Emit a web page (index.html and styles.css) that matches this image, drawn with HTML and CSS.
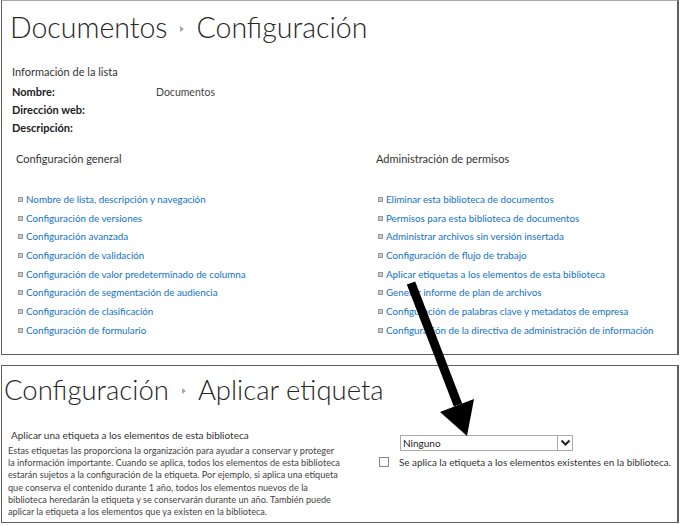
FILE: index.html
```html
<!DOCTYPE html>
<html lang="es">
<head>
<meta charset="utf-8">
<title>Configuración</title>
<link rel="stylesheet" href="styles.css">
</head>
<body>
<div class="panel p1">
  <div class="title"><span>Documentos</span><span class="crumb"></span><span>Configuración</span></div>
  <div class="info">
    <div class="info-h">Información de la lista</div>
    <div class="row"><span class="lbl">Nombre:</span><span class="val">Documentos</span></div>
    <div class="row"><span class="lbl">Dirección web:</span><span class="val"></span></div>
    <div class="row"><span class="lbl">Descripción:</span><span class="val"></span></div>
  </div>
  <div class="cols">
    <div class="col">
      <div class="col-h">Configuración general</div>
      <ul class="links">
        <li><a>Nombre de lista, descripción y navegación</a></li>
        <li><a>Configuración de versiones</a></li>
        <li><a>Configuración avanzada</a></li>
        <li><a>Configuración de validación</a></li>
        <li><a>Configuración de valor predeterminado de columna</a></li>
        <li><a>Configuración de segmentación de audiencia</a></li>
        <li><a>Configuración de clasificación</a></li>
        <li><a>Configuración de formulario</a></li>
      </ul>
    </div>
    <div class="col">
      <div class="col-h">Administración de permisos</div>
      <ul class="links">
        <li><a>Eliminar esta biblioteca de documentos</a></li>
        <li><a>Permisos para esta biblioteca de documentos</a></li>
        <li><a>Administrar archivos sin versión insertada</a></li>
        <li><a>Configuración de flujo de trabajo</a></li>
        <li><a>Aplicar etiquetas a los elementos de esta biblioteca</a></li>
        <li><a>Generar informe de plan de archivos</a></li>
        <li><a>Configuración de palabras clave y metadatos de empresa</a></li>
        <li><a>Configuración de la directiva de administración de información</a></li>
      </ul>
    </div>
  </div>
</div>
<div class="panel p2">
  <div class="title t2"><span>Configuración</span><span class="crumb"></span><span>Aplicar etiqueta</span></div>
  <div class="apply">
    <div class="apply-l">
      <div class="apply-h">Aplicar una etiqueta a los elementos de esta biblioteca</div>
      <p class="desc">Estas etiquetas las proporciona la organización para ayudar a conservar y proteger<br>la información importante. Cuando se aplica, todos los elementos de esta biblioteca<br>estarán sujetos a la configuración de la etiqueta. Por ejemplo, si aplica una etiqueta<br>que conserva el contenido durante 1 año, todos los elementos nuevos de la<br>biblioteca heredarán la etiqueta y se conservarán durante un año. También puede<br>aplicar la etiqueta a los elementos que ya existen en la biblioteca.</p>
    </div>
    <div class="apply-r">
      <div class="select"><span class="sel-text">Ninguno</span><span class="sel-btn"><svg width="11" height="8" viewBox="0 0 11 8"><path d="M1.5 1.5 L5.5 5.5 L9.5 1.5" fill="none" stroke="#222" stroke-width="2"/></svg></span></div>
      <label class="chk"><span class="box"></span><span>Se aplica la etiqueta a los elementos existentes en la biblioteca.</span></label>
    </div>
  </div>
</div>
<svg class="arrow" width="680" height="525" viewBox="0 0 680 525">
  <line x1="411" y1="283" x2="458" y2="405" stroke="#000" stroke-width="9"/>
  <polygon points="440,412 474,399 467,436" fill="#000"/>
</svg>
</body>
</html>
```
FILE: styles.css
```css
html, body { margin: 0; padding: 0; background: #fff; }
body {
  font-family: "Lato", "Open Sans", sans-serif;
  color: #333;
  width: 680px;
  height: 525px;
  position: relative;
  overflow: hidden;
}
.panel {
  margin-left: 1px;
  width: 678px;
  border: 1px solid #5f5f5f;
  border-right-width: 2px;
  box-sizing: border-box;
}
.p1 {
  height: 355px;
  border-top-color: #aaa;
  padding: 0 0 0 10px;
}
.p2 {
  margin-top: 10px;
  height: 158px;
  padding: 0 0 0 6px;
}
.title {
  display: flex;
  align-items: center;
  font-weight: 300;
  font-size: 28.5px;
  color: #262626;
  height: 52px;
  margin-left: -2px;
}
.crumb {
  width: 0; height: 0;
  border-top: 3.5px solid transparent;
  border-bottom: 3.5px solid transparent;
  border-left: 4px solid #a8a8a8;
  margin: 3px 12px 0 13px;
}
.info { padding-top: 10px; font-size: 11px; }
.info-h { height: 18px; line-height: 18px; color: #333; margin-bottom: 2px; }
.row { display: flex; height: 18px; line-height: 18px; }
.lbl { width: 144px; font-weight: 700; color: #222; }
.val { color: #444; font-size: 10.5px; }
.cols { display: grid; grid-template-columns: 360px 1fr; padding-left: 4px; margin-top: 13px; }
.col-h { font-size: 11px; color: #333; height: 18px; line-height: 18px; }
.links { list-style: none; margin: 22px 0 0 0; padding: 0; }
.links li { height: 18.7px; line-height: 18.7px; display: flex; align-items: center; font-size: 9.8px; white-space: nowrap; }
.links li::before {
  content: "";
  width: 3px; height: 3px;
  border: 1px solid #999;
  background: #ccc;
  margin: 0 3px 0 2px;
  flex: none;
}
.links a { color: #1172c6; }
.t2 { height: 46px; margin-top: 0; font-size: 27.5px; margin-left: -4px; }
.apply { display: flex; margin-top: 16px; }
.apply-l { width: 371px; flex: none; }
.apply-h { font-size: 10px; color: #333; height: 14px; line-height: 14px; padding-left: 3px; }
.desc { margin: 3px 0 0 0; font-size: 9.15px; line-height: 12.2px; color: #444; white-space: nowrap; }
.apply-r { padding-top: 7px; flex: none; }
.select {
  display: flex;
  margin-left: 21px;
  width: 173px; height: 16px;
  border: 1px solid #ababab;
  box-sizing: border-box;
  font-size: 10px;
}
.sel-text { flex: 1; line-height: 14px; padding-left: 2px; color: #222; }
.sel-btn { width: 14px; border-left: 1px solid #ababab; display: flex; align-items: center; justify-content: center; }
.chk { display: flex; align-items: center; margin-top: 5px; font-size: 9.9px; color: #333; white-space: nowrap; }
.box { width: 10px; height: 10px; border: 1px solid #888; box-sizing: border-box; margin-right: 10px; flex: none; }
.arrow { position: absolute; left: 0; top: 0; pointer-events: none; }
```
